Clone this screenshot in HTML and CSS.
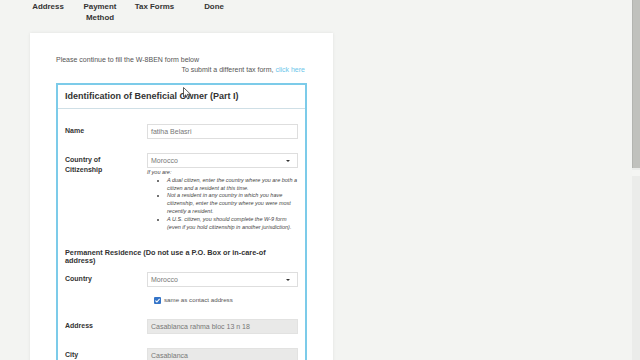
FILE: index.html
```html
<!DOCTYPE html>
<html>
<head>
<meta charset="utf-8">
<link rel="stylesheet" href="styles.css">
</head>
<body>
<div class="page">
  <nav class="steps">
    <div class="step step-address">Address</div>
    <div class="step step-payment">Payment<br>Method</div>
    <div class="step step-tax">Tax Forms</div>
    <div class="step step-done">Done</div>
  </nav>
  <div class="card">
    <p class="intro">Please continue to fill the W-8BEN form below</p>
    <p class="intro intro-right">To submit a different tax form, <a class="link">click here</a></p>
    <section class="panel">
      <svg class="cursor" width="9" height="13" viewBox="0 0 9 13"><path d="M0.5 0.5 L0.5 10 L2.8 7.8 L4.5 11.8 L6 11.1 L4.4 7.3 L7.6 7.3 Z" fill="#fff" stroke="#333" stroke-width="0.8"/></svg>
      <header class="panel-head">Identification of Beneficial Owner (Part I)</header>
      <div class="panel-body">
        <div class="row">
          <div class="label">Name</div>
          <div class="field">
            <div class="input">fatiha Belasri</div>
          </div>
        </div>
        <div class="row">
          <div class="label">Country of<br>Citizenship</div>
          <div class="field">
            <div class="input select">Morocco<span class="caret"></span></div>
            <div class="help">
              <p class="help-lead">If you are:</p>
              <ul class="help-list">
                <li>A dual citizen, enter the country where you are both a citizen and a resident at this time.</li>
                <li>Not a resident in any country in which you have citizenship, enter the country where you were most recently a resident.</li>
                <li>A U.S. citizen, you should complete the W-9 form (even if you hold citizenship in another jurisdiction).</li>
              </ul>
            </div>
          </div>
        </div>
        <h3 class="section-title">Permanent Residence (Do not use a P.O. Box or in-care-of address)</h3>
        <div class="row row-tight">
          <div class="label">Country</div>
          <div class="field">
            <div class="input select">Morocco<span class="caret"></span></div>
            <div class="check-row">
              <span class="checkbox"><svg width="7" height="7" viewBox="0 0 7 7"><path d="M1.4 3.6 L2.9 5 L5.6 1.9" fill="none" stroke="#fff" stroke-width="1.1"/></svg></span>
              <span class="check-label">same as contact address</span>
            </div>
          </div>
        </div>
        <div class="row">
          <div class="label">Address</div>
          <div class="field">
            <div class="input disabled">Casablanca rahma bloc 13 n 18</div>
          </div>
        </div>
        <div class="row">
          <div class="label">City</div>
          <div class="field">
            <div class="input disabled">Casablanca</div>
          </div>
        </div>
      </div>
    </section>
  </div>
</div>
<div class="scrollbar">
  <div class="thumb"></div>
  <div class="track-gap"></div>
</div>
</body>
</html>
```
FILE: styles.css
```css
html, body {
  margin: 0;
  padding: 0;
}
body {
  width: 640px;
  height: 360px;
  overflow: hidden;
  display: flex;
  background: #f3f4f2;
  font-family: "Liberation Sans", Arial, sans-serif;
  color: #333;
}
.page {
  flex: 1;
  min-width: 0;
}
.steps {
  display: flex;
  padding-left: 22px;
  padding-top: 1px;
  height: 22px;
}
.step {
  font-weight: bold;
  font-size: 7.9px;
  line-height: 11px;
  text-align: center;
  color: #333;
}
.step-address { width: 52px; }
.step-payment { width: 52px; }
.step-tax { width: 57px; }
.step-done { width: 62px; }

.card {
  margin-top: 10px;
  margin-left: 30px;
  width: 251px;
  height: 400px;
  padding: 22px 26px 0;
  background: #fff;
  box-shadow: 0 0 3px rgba(0, 0, 0, 0.08);
}
.intro {
  margin: 0;
  font-size: 7px;
  line-height: 10px;
  color: #555;
}
.intro-right {
  text-align: right;
  padding-right: 2px;
}
.link {
  color: #6cc6ea;
}
.panel {
  position: relative;
  margin-top: 8px;
  border: 2px solid #7ccbe9;
}
.cursor {
  position: absolute;
  left: 125px;
  top: 2px;
}
.panel-head {
  padding: 6px 0 6px 7px;
  font-size: 9px;
  line-height: 11px;
  font-weight: bold;
  color: #333;
  border-bottom: 1px solid #cfdfe6;
}
.panel-body {
  padding: 15px 7px 0 7px;
}
.row {
  display: grid;
  grid-template-columns: 82px 151px;
  margin-bottom: 14px;
}
.label {
  padding-top: 1.5px;
  font-size: 7px;
  line-height: 10px;
  font-weight: bold;
  color: #333;
}
.input {
  position: relative;
  box-sizing: border-box;
  height: 15px;
  padding-left: 3px;
  border: 1px solid #dedede;
  background: #fff;
  font-size: 7px;
  line-height: 13px;
  color: #777;
}
.input.disabled {
  background: #e9e9e8;
  border-color: #e2e2e1;
}
.caret {
  position: absolute;
  right: 7px;
  top: 5.5px;
  width: 0;
  height: 0;
  border-left: 2px solid transparent;
  border-right: 2px solid transparent;
  border-top: 2.5px solid #333;
}
.help {
  margin-top: 1px;
  margin-right: -2px;
  font-size: 5.5px;
  line-height: 7.8px;
  font-style: italic;
  color: #444;
}
.help-lead {
  margin: 0;
}
.help-list {
  margin: 0;
  padding-left: 20px;
}
.section-title {
  max-width: 225px;
  margin: 18px 0 7px;
  font-size: 7.3px;
  line-height: 8px;
  font-weight: bold;
  color: #333;
}
.row-tight {
  margin-bottom: 15px;
}
.check-row {
  display: flex;
  align-items: center;
  margin-top: 9px;
  padding-left: 7px;
  height: 8px;
}
.checkbox {
  display: flex;
  width: 7px;
  height: 7px;
  border-radius: 1px;
  background: #3474c8;
}
.check-label {
  margin-left: 3px;
  font-size: 6.2px;
  line-height: 8px;
  color: #555;
}
.scrollbar {
  width: 8px;
  display: flex;
  flex-direction: column;
  background: #ebecea;
}
.thumb {
  height: 168px;
  background: #c0c1bd;
  border-left: 1px solid #b3b4b0;
  box-sizing: border-box;
}
.track-gap {
  height: 6px;
  margin-top: 2px;
  background: #f4f5f3;
}
```
